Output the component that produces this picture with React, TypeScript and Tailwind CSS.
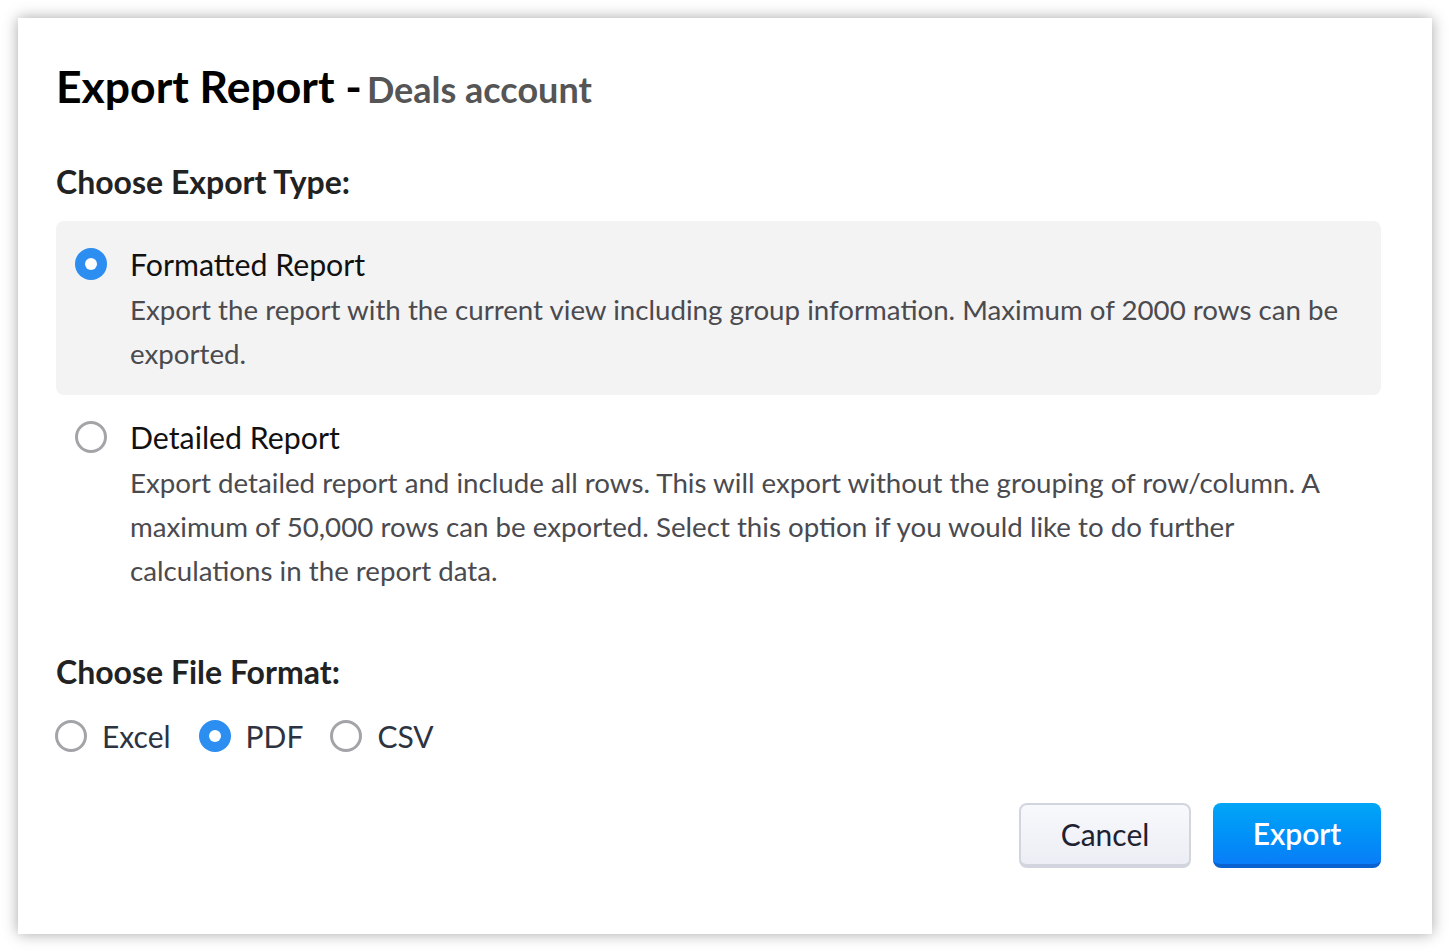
import React from "react";

function Radio({ checked }: { checked: boolean }) {
  return checked ? (
    <span className="flex h-[32px] w-[32px] shrink-0 items-center justify-center rounded-full bg-[#2b8ef0]">
      <span className="block h-[12px] w-[12px] rounded-full bg-white" />
    </span>
  ) : (
    <span className="block h-[32px] w-[32px] shrink-0 rounded-full border-[3px] border-[#a3a4a8] bg-white" />
  );
}

export default function App() {
  return (
    <div className="min-h-[952px] w-full bg-white p-[18px] [font-family:Lato,'Noto_Sans',sans-serif]">
      <div className="flex h-[916px] w-[1414px] flex-col bg-white pl-[38px] pr-[51px] pt-[42px] shadow-[0_0_14px_rgba(0,0,0,0.35)]">
        <div className="flex h-[52px] items-baseline leading-[52px] whitespace-nowrap">
          <span className="text-[44.5px] font-bold text-black">Export Report -</span>
          <span className="ml-[5px] text-[36px] font-bold text-[#555555]">Deals account</span>
        </div>
        <div className="mt-[50px] h-[40px] text-[32px] font-bold leading-[40px] text-[#222222]">
          Choose Export Type:
        </div>
        <div className="mt-[19px] flex gap-[23px] rounded-[8px] bg-[#f3f3f3] pb-[19px] pl-[19px] pr-[20px] pt-[25px]">
          <div className="pt-[2px]">
            <Radio checked />
          </div>
          <div className="flex flex-col">
            <div className="h-[36px] text-[30.3px] leading-[36px] text-[#111111]">Formatted Report</div>
            <div className="mt-[6px] text-[27.7px] leading-[44px] text-[#4a4a4f]">
              Export the report with the current view including group information. Maximum of 2000 rows can be exported.
            </div>
          </div>
        </div>
        <div className="flex gap-[23px] pl-[19px] pr-[20px] pt-[24px]">
          <div className="pt-[2px]">
            <Radio checked={false} />
          </div>
          <div className="flex flex-col">
            <div className="h-[36px] text-[30.3px] leading-[36px] text-[#111111]">Detailed Report</div>
            <div className="mt-[6px] text-[27.7px] leading-[44px] text-[#4a4a4f]">
              Export detailed report and include all rows. This will export without the grouping of row/column. A maximum of 50,000 rows can be exported. Select this option if you would like to do further calculations in the report data.
            </div>
          </div>
        </div>
        <div className="mt-[59px] h-[40px] text-[32px] font-bold leading-[40px] text-[#222222]">
          Choose File Format:
        </div>
        <div className="mt-[26px] flex h-[36px] items-center">
          <label className="-ml-[1px] flex items-center gap-[15px]">
            <Radio checked={false} />
            <span className="text-[30px] leading-[36px] text-[#2d3340]">Excel</span>
          </label>
          <label className="ml-[28px] flex items-center gap-[15px]">
            <Radio checked />
            <span className="text-[30px] leading-[36px] text-[#2d3340]">PDF</span>
          </label>
          <label className="ml-[27px] flex items-center gap-[15px]">
            <Radio checked={false} />
            <span className="text-[30px] leading-[36px] text-[#2d3340]">CSV</span>
          </label>
        </div>
        <div className="mt-[49px] flex justify-end gap-[22px]">
          <button className="h-[65px] w-[172px] rounded-[8px] border-2 border-b-[4px] border-[#d3d5de] bg-gradient-to-b from-[#f8f9fc] to-[#eceef5] text-[30px] text-[#1f2230]">
            Cancel
          </button>
          <button className="h-[65px] w-[168px] rounded-[8px] border-b-[4px] border-[#0a62d0] bg-gradient-to-b from-[#03a6f6] to-[#0a7df8] text-[30px] font-semibold text-white">
            Export
          </button>
        </div>
      </div>
    </div>
  );
}
